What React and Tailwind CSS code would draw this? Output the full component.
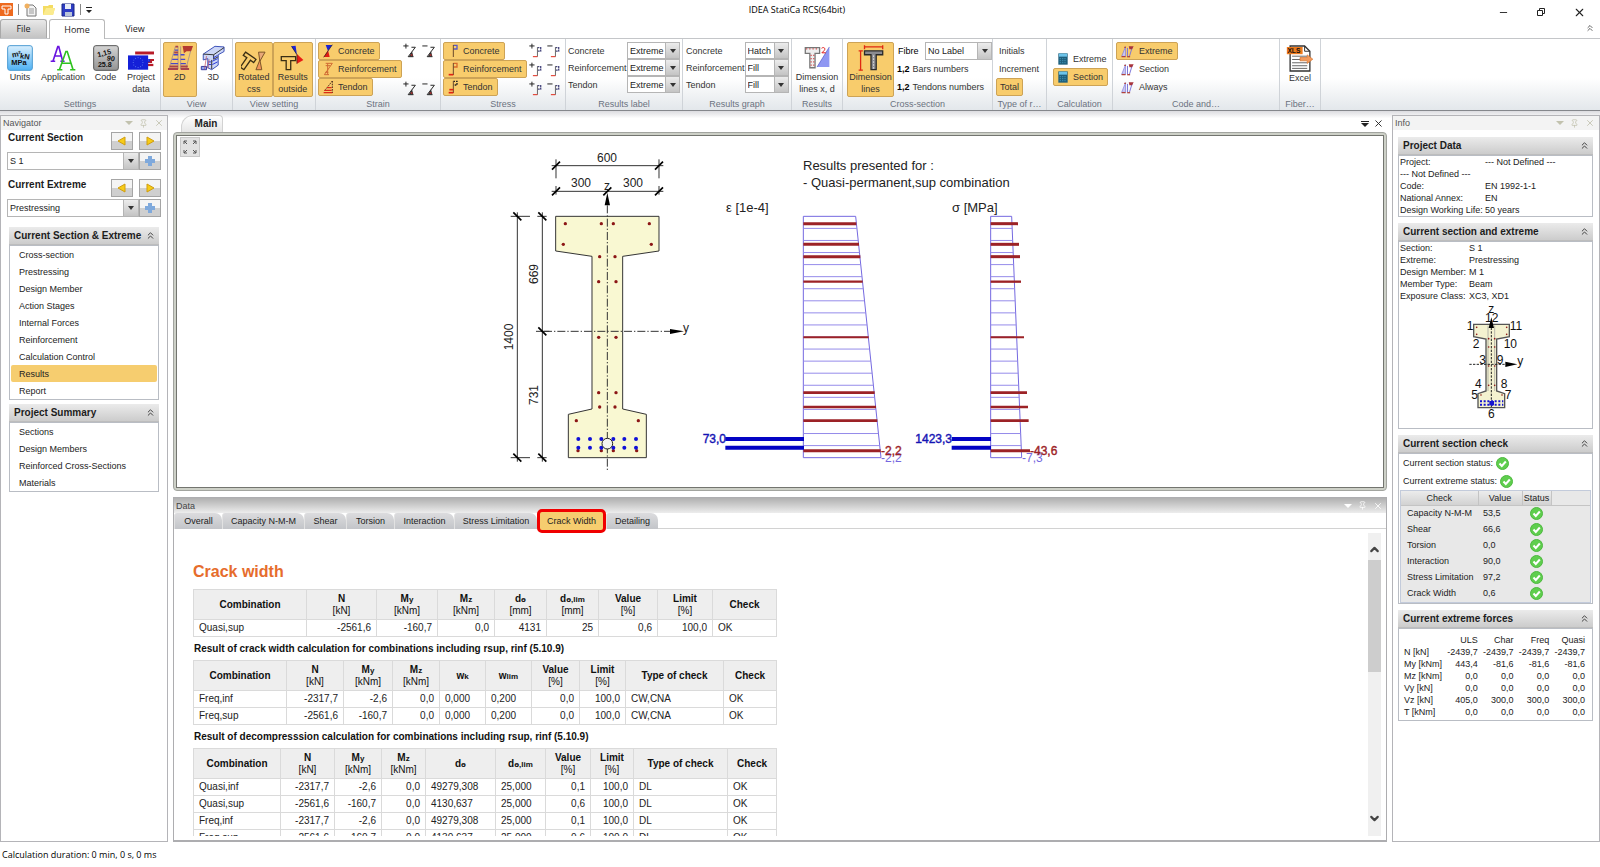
import { ChevronDown, ChevronUp, ChevronsUp, Minus, Pin, X } from "lucide-react";

const ON = "bg-[#f8cc6c] border-[#cda356]";
const OFF = "bg-transparent border-transparent";

/* ---------- ribbon icons ---------- */

function UnitsIcon() {
  return (
    <svg viewBox="0 0 80 80" className="w-[26px] h-[26px]">
      <defs>
        <linearGradient id="units" x1="0" y1="0" x2="0" y2="1">
          <stop offset="0" stopColor="#d8eefd" />
          <stop offset="1" stopColor="#4fb2f4" />
        </linearGradient>
      </defs>
      <rect x="2" y="2" width="76" height="76" rx="7" fill="url(#units)" stroke="#4a9ad2" strokeWidth="3" />
      <g fontFamily="Liberation Sans" fontWeight="bold" fontSize="23" fill="#111">
        <text x="16" y="38" transform="rotate(-12 20 34)">m²</text>
        <text x="40" y="42" transform="rotate(8 50 38)">kN</text>
        <text x="13" y="63">MPa</text>
      </g>
    </svg>
  );
}

function ApplicationIcon() {
  return (
    <svg viewBox="0 0 80 80" className="w-[26px] h-[26px]" fill="none">
      <path d="M2 50h14M9 50L24 5h3l12 45M32 50h13M14 34h20" stroke="#6a16e0" strokeWidth="5" />
      <path d="M22 76h16M29 76L49 20h4l18 56M62 76h16M37 56h28" stroke="#2fc21f" strokeWidth="5" />
    </svg>
  );
}

function CodeIcon() {
  return (
    <svg viewBox="0 0 80 80" className="w-[26px] h-[26px]">
      <defs>
        <linearGradient id="code" x1="0" y1="0" x2="0" y2="1">
          <stop offset="0" stopColor="#d4d4d4" />
          <stop offset="1" stopColor="#949494" />
        </linearGradient>
      </defs>
      <rect x="2" y="2" width="76" height="76" rx="7" fill="url(#code)" stroke="#555" strokeWidth="3" />
      <g fontFamily="Liberation Sans" fontWeight="bold" fontSize="22" fill="#111">
        <text x="14" y="34" transform="rotate(-14 30 30)">1,15</text>
        <text x="43" y="48" transform="rotate(10 50 40)">90</text>
        <text x="15" y="67">25.8</text>
      </g>
    </svg>
  );
}

function ProjectIcon() {
  const stars = Array.from({ length: 12 }, (_, i) => (i * Math.PI) / 6);
  return (
    <svg viewBox="0 0 84 80" className="w-[28px] h-[26px]">
      <path d="M24 20h58v9H24z" fill="#b81c28" />
      <path d="M68 43h14v6H68zM62 49h14v6H62z" fill="#b81c28" />
      <path d="M64 43h6v10h-6z" fill="#1d2fd0" />
      <path d="M60 58h20v7H60z" fill="#b81c28" />
      <path d="M2 32h62v44H2z" fill="#1420d8" />
      {stars.map(a => (
        <circle key={a} cx={33 + 15 * Math.cos(a)} cy={54 + 15 * Math.sin(a)} r="1.500" fill="#7fa8ff" />
      ))}
    </svg>
  );
}

function View2DIcon() {
  return (
    <svg viewBox="0 0 80 80" className="w-[26px] h-[26px]" fill="none">
      <path d="M26 4L6 74M34 4v70M42 4v70M76 6L58 74" stroke="#8a7a90" strokeWidth="2" />
      <path d="M24 16h10M20 30h14M16 44h18M12 57h22M42 30h12M42 44h14M42 57h16" stroke="#4a48c8" strokeWidth="4" />
      <path d="M26 5h8M22 23h12M3 74h31M8 66h26M42 74h26M42 66h22" stroke="#a8444c" strokeWidth="6" />
      <path d="M48 3h32l-6 16H60l-8 6z" fill="#b43a30" />
    </svg>
  );
}

function View3DIcon() {
  return (
    <svg viewBox="0 0 80 80" className="w-[26px] h-[26px]" fill="none" strokeWidth="3">
      <path d="M10 28L46 4l28 2v14L56 30v32L36 76 24 70V42l-14 4z" fill="#ccd6f6" stroke="#3a4fb8" />
      <path d="M10 28l32 2 32-22M42 30v14l14-8M36 46v28" stroke="#333" />
      <path d="M40 40l14-8M38 50l16-8M38 60l16-8M26 52h8M26 60h8" stroke="#2635d8" />
      <path d="M4 66h16v10H4z" fill="#8ea6ee" stroke="#3a3a9c" />
      <path d="M20 34l-6 40M28 44l-4 28" stroke="#c04858" strokeWidth="2" />
    </svg>
  );
}

function RotatedIcon() {
  return (
    <svg viewBox="0 0 80 80" className="w-[26px] h-[26px]" fill="none">
      <path d="M14 22l32 22-7 10-10-7-20 29-11-8 20-29-11-7z" stroke="#3a2e14" strokeWidth="4" />
      <path d="M54 22h20L58 50z" fill="#e8a878" stroke="#7a5326" strokeWidth="3" />
      <path d="M58 46L46 76h18z" fill="#f0955a" stroke="#7a5326" strokeWidth="3" />
    </svg>
  );
}

function OutsideIcon() {
  return (
    <svg viewBox="0 0 80 80" className="w-[26px] h-[26px]">
      <path d="M4 36h44v12H33v28H19V48H4z" fill="none" stroke="#3a2e14" strokeWidth="4" />
      <path d="M34 4l14-2 4 28z" fill="#1c24d8" />
      <path d="M52 28l20 18-20 12z" fill="#e81c14" />
      <path d="M36 4l16 26v28" fill="none" stroke="#222" strokeWidth="2" />
    </svg>
  );
}

function DimensionXdIcon() {
  return (
    <svg viewBox="0 0 80 80" className="w-[26px] h-[26px]">
      <path d="M4 8h44v18H34v44H18V26H4z" fill="#eee" stroke="#777" strokeWidth="4" />
      <path d="M6 12h40M22 30v38M30 30v38" stroke="#d03030" strokeWidth="3" strokeDasharray="4 6" />
      <path d="M78 6v62H40z" fill="#8f97f2" />
      <path d="M78 6L40 68" stroke="#4a52c8" strokeWidth="2" />
      <path d="M54 10c8-6 14 2 7 8l-6 6h12" fill="none" stroke="#e01818" strokeWidth="3" />
    </svg>
  );
}

function DimensionIcon() {
  return (
    <svg viewBox="0 0 84 80" className="w-[28px] h-[26px]" fill="none">
      <path d="M22 6h56M10 18v60" stroke="#e02812" strokeWidth="4" />
      <path d="M22 1v12M78 1v12M4 18h13M4 77h13" stroke="#e02812" strokeWidth="4" />
      <path d="M22 18h56v12H58v46H42V30H22z" fill="#8b8b90" stroke="#2a2a2a" strokeWidth="4" />
      <path d="M50 32v42" stroke="#ddd" strokeWidth="3" strokeDasharray="5 4" />
    </svg>
  );
}

function ExcelIcon() {
  return (
    <svg viewBox="0 0 84 82" className="w-[28px] h-[27px]">
      <path d="M12 3h44l16 16v60H12z" fill="#fff" stroke="#333" strokeWidth="4" />
      <path d="M56 3v16h16" fill="none" stroke="#333" strokeWidth="3" />
      <path d="M18 34h46M18 44h46M18 54h46M18 63h46M18 71h46" stroke="#666" strokeWidth="3" />
      <path d="M2 6h48v22H2z" fill="#ee7a1c" />
      <text x="4" y="24" fontFamily="Liberation Sans" fontWeight="bold" fontSize="20" fill="#111">XLS</text>
      <path d="M42 38h22v-8l17 13-17 13v-8H42z" fill="#f29a5c" stroke="#d46f28" strokeWidth="2" />
    </svg>
  );
}

function StrainIcon({ kind }) {
  if (kind === "concrete") {
    return (
      <svg viewBox="0 0 30 40" className="w-[10px] h-[14px] shrink-0">
        <path d="M8 2h20L15 20z" fill="#1c24d0" />
        <path d="M15 18l5 20H2z" fill="#e01c14" />
        <path d="M28 1L2 39" stroke="#222" strokeWidth="2" />
      </svg>
    );
  }
  if (kind === "reinforcement") {
    return (
      <svg viewBox="0 0 30 40" className="w-[10px] h-[14px] shrink-0" fill="none">
        <path d="M8 3h20L4 37h14M14 3v34M8 10h14M6 30h10" stroke="#d06a34" strokeWidth="3" />
      </svg>
    );
  }
  return (
    <svg viewBox="0 0 30 40" className="w-[10px] h-[14px] shrink-0" fill="none">
      <path d="M28 2L4 32M28 2v36" stroke="#4a2c1c" strokeWidth="3" strokeDasharray="5 3" />
      <path d="M2 37h26M4 30h22M12 22h14" stroke="#d82c18" strokeWidth="4" />
    </svg>
  );
}

function StressIcon({ kind }) {
  const color = { concrete: "#5a5ac4", reinforcement: "#d86a2c", tendon: "#222" }[kind];
  return (
    <svg viewBox="0 0 30 40" className="w-[10px] h-[14px] shrink-0" fill="none">
      <path d="M16 3h11v11H16" stroke={color} strokeWidth="4" strokeDasharray={kind === "tendon" ? "5 3" : "none"} />
      <path d="M16 2v36" stroke="#6b4a2c" strokeWidth="3" />
      {kind !== "concrete" && <path d="M2 37h14" stroke="#e02414" strokeWidth="5" />}
      {kind === "tendon" && <path d="M4 28h12" stroke="#e02414" strokeWidth="5" />}
    </svg>
  );
}

function StepIcon({ plus, stress }) {
  return (
    <svg viewBox="0 0 40 44" className="w-[13px] h-[15px]" fill="none">
      <path d={plus ? "M1 8h16M9 1v15" : "M1 8h16"} stroke="#222" strokeWidth="3" />
      {stress ? (
        <>
          <path d="M26 13h10v11H26" stroke="#44447c" strokeWidth="4" strokeDasharray="6 2" />
          <path d="M26 12v29" stroke="#666" strokeWidth="3" />
          <path d="M12 41h14" stroke="#e02414" strokeWidth="3" />
        </>
      ) : (
        <>
          <path d="M38 12L16 41M26 12h12M16 41h16" stroke="#222" strokeWidth="3" />
          <path d="M28 24l4 17H18z" fill="#333" />
          <path d="M24 36h5" stroke="#d03030" strokeWidth="4" />
        </>
      )}
    </svg>
  );
}

function CalcIcon() {
  return (
    <svg viewBox="0 0 30 36" className="w-[10px] h-[12px] shrink-0">
      <path d="M1 1h28v34H1z" fill="#1e5f7c" />
      <path d="M3 2h24v9H3z" fill="#6cc4ea" />
      <path d="M5 17h20M5 23h20M5 29h20" stroke="#3f90b4" strokeWidth="3" strokeDasharray="4 3" />
    </svg>
  );
}

function CodeCheckIcon() {
  return (
    <svg viewBox="0 0 40 38" className="w-[13px] h-[13px] shrink-0" fill="none">
      <path d="M14 4L2 34h12z" fill="#c9c6f2" stroke="#7a74d8" strokeWidth="2" />
      <path d="M2 35h12M10 6h5" stroke="#b0443c" strokeWidth="4" />
      <path d="M20 8v26M34 8l-8 26" stroke="#7a74d8" strokeWidth="3" />
      <path d="M24 3h15l-5 9h-8z" fill="#a8343c" />
      <path d="M19 35h9" stroke="#b0443c" strokeWidth="4" />
    </svg>
  );
}

/* ---------- ribbon parts ---------- */

function Group({ label, width, pad = "px-[2px]", children }) {
  return (
    <section className={`flex flex-col shrink-0 border-r border-[#cfd3d8] pt-[3px] ${width}`}>
      <div className={`flex h-[56px] ${pad}`}>{children}</div>
      <div className="flex-1 flex items-center justify-center text-[#6b7280] whitespace-nowrap">{label}</div>
    </section>
  );
}

function BigButton({ icon, lines, active, width }) {
  return (
    <button className={`flex flex-col items-center h-[55px] border rounded-[2px] pt-[2px] leading-[12px] whitespace-nowrap text-[#333] ${width} ${active ? ON : OFF}`}>
      {icon}
      {lines.map(l => <span key={l}>{l}</span>)}
    </button>
  );
}

function SmallButton({ icon, label, active }) {
  return (
    <button className={`flex items-center self-start gap-[5px] h-[18px] border rounded-[2px] pl-[4px] pr-[4px] whitespace-nowrap text-[#333] ${active ? ON : OFF}`}>
      {icon}
      {label}
    </button>
  );
}

function Select({ value, width, label, height = "h-[17px]", editable }) {
  return (
    <div className={`flex border border-[#b5b5b5] bg-white ${height} ${width}`}>
      <select aria-label={label} defaultValue={value} className="appearance-none flex-1 min-w-0 pl-[2px] outline-none bg-white text-[#222]">
        <option>{value}</option>
      </select>
      <span className={`flex items-center justify-center border-l border-[#b5b5b5] bg-linear-to-b from-[#ececec] to-[#c4c4c4] ${editable ? "w-[15px]" : "w-[14px]"}`}>
        <svg viewBox="0 0 6 4" className="w-[6px] h-[4px]"><path d="M0 0h6L3 4z" fill="#333" /></svg>
      </span>
    </div>
  );
}

const KINDS = [
  ["concrete", "Concrete"],
  ["reinforcement", "Reinforcement"],
  ["tendon", "Tendon"],
];

function LabelledSelects({ values, width, name }) {
  return (
    <div className="flex-1 flex flex-col">
      {KINDS.map(([k, label], i) => (
        <div key={k} className="flex items-center justify-between h-[17px] whitespace-nowrap text-[#333]">
          <span>{label}</span>
          <Select value={values[i]} width={width} label={`${name} ${label}`} />
        </div>
      ))}
    </div>
  );
}

function Ribbon() {
  return (
    <div className="flex h-[73px] shrink-0 overflow-hidden border-t border-b border-t-[#c4c6c9] border-b-[#85878c] bg-linear-to-b from-white from-55% to-[#e3e7eb]">
      <Group label="Settings" width="w-[161px]" pad="px-0">
        <BigButton icon={<UnitsIcon />} lines={["Units"]} width="w-[40px]" />
        <BigButton icon={<ApplicationIcon />} lines={["Application"]} width="w-[46px]" />
        <BigButton icon={<CodeIcon />} lines={["Code"]} width="w-[39px]" />
        <BigButton icon={<ProjectIcon />} lines={["Project", "data"]} width="w-[32px]" />
      </Group>
      <Group label="View" width="w-[72px]">
        <BigButton icon={<View2DIcon />} lines={["2D"]} width="w-[34px]" active />
        <BigButton icon={<View3DIcon />} lines={["3D"]} width="w-[34px]" />
      </Group>
      <Group label="View setting" width="w-[83px]">
        <BigButton icon={<RotatedIcon />} lines={["Rotated", "css"]} width="w-[38px]" active />
        <BigButton icon={<OutsideIcon />} lines={["Results", "outside"]} width="w-[41px]" active />
      </Group>
      <Group label="Strain" width="w-[125px]">
        <div className="flex-1 flex flex-col">
          {KINDS.map(([k, label]) => <SmallButton key={k} icon={<StrainIcon kind={k} />} label={label} active />)}
        </div>
        <div className="flex flex-col justify-between pb-[2px] pt-[1px]">
          {[1, 3].map(r => (
            <div key={r} className="flex gap-[6px] pr-[3px]">
              <button aria-label="Increase strain"><StepIcon plus /></button>
              <button aria-label="Decrease strain"><StepIcon /></button>
            </div>
          ))}
        </div>
      </Group>
      <Group label="Stress" width="w-[125px]">
        <div className="flex-1 flex flex-col">
          {KINDS.map(([k, label]) => <SmallButton key={k} icon={<StressIcon kind={k} />} label={label} active />)}
        </div>
        <div className="flex flex-col justify-between pb-[2px] pt-[1px]">
          {KINDS.map(([k]) => (
            <div key={k} className="flex gap-[5px] pr-[3px]">
              <button aria-label={`Increase ${k} stress`}><StepIcon plus stress /></button>
              <button aria-label={`Decrease ${k} stress`}><StepIcon stress /></button>
            </div>
          ))}
        </div>
      </Group>
      <Group label="Results label" width="w-[117px]">
        <LabelledSelects name="Label" values={["Extreme", "Extreme", "Extreme"]} width="w-[53px]" />
      </Group>
      <Group label="Results graph" width="w-[109px]" pad="px-[3px]">
        <LabelledSelects name="Graph" values={["Hatch", "Fill", "Fill"]} width="w-[44px]" />
      </Group>
      <Group label="Results" width="w-[51px]" pad="px-[1px]">
        <BigButton icon={<DimensionXdIcon />} lines={["Dimension", "lines x, d"]} width="w-[48px]" />
      </Group>
      <Group label="Cross-section" width="w-[150px]" pad="pl-[4px]">
        <BigButton icon={<DimensionIcon />} lines={["Dimension", "lines"]} width="w-[47px]" active />
        <div className="flex-1 flex flex-col pl-[3px] whitespace-nowrap text-[#333]">
          <div className="flex items-center justify-between h-[18px] pl-[1px]">
            <span className="text-black">Fibre</span>
            <Select value="No Label" width="w-[67px]" label="Fibre" height="h-[18px]" />
          </div>
          <button className="flex items-center gap-[3px] h-[18px]"><b className="text-black">1,2</b>Bars numbers</button>
          <button className="flex items-center gap-[3px] h-[18px]"><b className="text-black">1,2</b>Tendons numbers</button>
        </div>
      </Group>
      <Group label="Type of r…" width="w-[54px]" pad="px-[3px]">
        <div className="flex flex-col text-[#333]">
          <button className="h-[18px] px-[3px] text-left">Initials</button>
          <button className="h-[18px] px-[3px] text-left">Increment</button>
          <button className={`h-[18px] px-[2px] border rounded-[2px] self-start w-[27px] ${ON}`}>Total</button>
        </div>
      </Group>
      <Group label="Calculation" width="w-[66px]" pad="px-[6px]">
        <div className="flex flex-col pt-[8px]">
          <SmallButton icon={<CalcIcon />} label="Extreme" />
          <SmallButton icon={<CalcIcon />} label="Section" active />
        </div>
      </Group>
      <Group label="Code and…" width="w-[167px]" pad="px-[3px]">
        <div className="flex flex-col">
          <SmallButton icon={<CodeCheckIcon />} label="Extreme" active />
          <SmallButton icon={<CodeCheckIcon />} label="Section" />
          <SmallButton icon={<CodeCheckIcon />} label="Always" />
        </div>
      </Group>
      <Group label="Fiber…" width="w-[41px]" pad="px-0">
        <BigButton icon={<ExcelIcon />} lines={["Excel"]} width="w-[40px]" />
      </Group>
    </div>
  );
}

function TitleBar() {
  return (
    <header className="shrink-0 font-['Open_Sans','Noto_Sans',sans-serif]">
      <div className="grid grid-cols-[1fr_auto_1fr] h-[19px] items-center">
        <div className="flex items-center gap-[5px]">
          <svg viewBox="0 0 13 13" className="w-[13px] h-[13px]">
            <path d="M0 0h13v13H0z" fill="#ee6a1e" />
            <path d="M2 3h9v3H8v5H5V6H2z" fill="none" stroke="#fff" />
          </svg>
          <span className="w-px h-[11px] bg-[#888]" />
          <button aria-label="New">
            <svg viewBox="0 0 13 14" className="w-[13px] h-[14px]">
              <path d="M3 2h6l3 3v8H3z" fill="#f4f4f4" stroke="#777" />
              <path d="M5 6h5M5 8h5M5 10h5" stroke="#999" />
              <circle cx="3" cy="3" r="2.500" fill="#f0b060" />
            </svg>
          </button>
          <button aria-label="Open">
            <svg viewBox="0 0 14 13" className="w-[14px] h-[13px]">
              <path d="M1 12V3h5l1-1h4v3h2l-2 7z" fill="#f4dc62" />
              <path d="M1 12l3-7h9l-2 7z" fill="#fbeb8e" />
            </svg>
          </button>
          <button aria-label="Save">
            <svg viewBox="0 0 14 14" className="w-[14px] h-[14px]">
              <path d="M1 1h12v12H1z" fill="#2d3cc4" stroke="#1b2684" />
              <path d="M4 1h6v5H4z" fill="#e8ecf6" />
              <path d="M4 9h7v4H4z" fill="#b9c4d8" />
            </svg>
          </button>
          <span className="w-px h-[11px] bg-[#888]" />
          <button aria-label="Customize toolbar">
            <svg viewBox="0 0 6 6" className="w-[6px] h-[6px]"><path d="M0 0h6v1H0zM0 3h6L3 6z" fill="#222" /></svg>
          </button>
        </div>
        <h1 className="text-[9px] pr-[6px] text-black">IDEA StatiCa RCS(64bit)</h1>
        <div className="flex justify-end items-center gap-[27px] pr-[14px] pt-[5px] text-[#222]">
          <button aria-label="Minimize"><Minus size={11} strokeWidth={2} /></button>
          <button aria-label="Restore">
            <svg viewBox="0 0 10 10" className="w-[10px] h-[10px]" fill="none" stroke="currentColor">
              <path d="M1.500 3.500h5v5h-5zM3.500 3V1.500h5v5H7" />
            </svg>
          </button>
          <button aria-label="Close"><X size={13} strokeWidth={2} /></button>
        </div>
      </div>
      <nav className="flex h-[19px] items-end text-[9px] text-[#222]">
        <button className="w-[47px] h-[19px] border border-b-0 border-[#a9a9a9] rounded-t-[3px] bg-linear-to-b from-[#e9e9e9] to-[#c3c3c3]">File</button>
        <button className="w-[56px] h-[20px] -mb-px ml-[2px] border border-b-0 border-[#b9b9b9] rounded-t-[3px] bg-white relative">Home</button>
        <button className="w-[60px] h-[19px]">View</button>
        <button aria-label="Collapse ribbon" className="ml-auto mr-[5px] mb-[5px]"><ChevronsUp size={10} className="text-[#444]" /></button>
      </nav>
    </header>
  );
}

/* ---------- side panels ---------- */

function PanelTools({ color }) {
  return (
    <span className={`flex items-center gap-[6px] ${color}`}>
      <svg viewBox="0 0 8 4" className="w-[8px] h-[4px]"><path d="M0 0h8L4 4z" fill="currentColor" /></svg>
      <Pin size={9} />
      <X size={10} />
    </span>
  );
}

function Caption({ children }) {
  return (
    <h2 className="flex items-center justify-between h-[18px] pl-[5px] pr-[3px] text-[10px] font-bold text-[#1c1c1c] whitespace-nowrap bg-linear-to-b from-[#ebebeb] to-[#cccccc] border-b border-[#bdbdbd]">
      {children}
      <ChevronsUp size={11} className="text-[#333]" />
    </h2>
  );
}

function StepButton({ dir }) {
  return (
    <button aria-label={dir} className="flex items-center justify-center w-[22px] h-[18px] border border-[#a5a5a5] bg-linear-to-b from-[#f4f4f4] from-48% to-[#cfcfcf] to-52%">
      <svg viewBox="0 0 10 10" className="w-[10px] h-[10px]">
        {dir === "Add" ? (
          <path d="M3 0h4v3h3v4H7v3H3V7H0V3h3z" fill="#7fa9dc" />
        ) : (
          <path d={dir === "Next" ? "M2 1l7 4-7 4z" : "M8 1L1 5l7 4z"} fill="#f7cc18" stroke="#cf9d10" />
        )}
      </svg>
    </button>
  );
}

function Picker({ title, value }) {
  return (
    <div>
      <div className="flex items-start justify-between h-[20px]">
        <h2 className="text-[10px] font-bold leading-[12px] pl-px text-[#1c1c1c]">{title}</h2>
        <div className="flex gap-[6px]">
          <StepButton dir="Previous" />
          <StepButton dir="Next" />
        </div>
      </div>
      <div className="flex">
        <Select value={value} width="flex-1" label={title} height="h-[18px]" editable />
        <StepButton dir="Add" />
      </div>
    </div>
  );
}

const NAV = [
  ["Current Section & Extreme", ["Cross-section", "Prestressing", "Design Member", "Action Stages", "Internal Forces", "Reinforcement", "Calculation Control", "Results", "Report"]],
  ["Project Summary", ["Sections", "Design Members", "Reinforced Cross-Sections", "Materials"]],
];

function Navigator() {
  return (
    <aside className="w-[168px] shrink-0 border border-[#b4b4b8] bg-white">
      <div className="flex items-center justify-between h-[14px] pl-[2px] pr-[3px] bg-[#f3f3f3] text-[#555]">
        Navigator
        <PanelTools color="text-[#c2c2ae]" />
      </div>
      <div className="flex flex-col gap-[9px] pl-[6px] pr-[6px] pt-[2px]">
        <Picker title="Current Section" value="S 1" />
        <Picker title="Current Extreme" value="Prestressing" />
      </div>
      <div className="flex flex-col gap-[4px] pt-[10px] pl-[8px] pr-[8px]">
        {NAV.map(([title, items]) => (
          <section key={title}>
            <Caption>{title}</Caption>
            <ul className="border border-[#b9bdc4] px-px">
              {items.map(item => (
                <li key={item} className="flex">
                  <button className={`flex-1 h-[17px] pl-[8px] text-left rounded-[2px] text-[#222] ${item === "Results" ? "bg-[#f6cd6f]" : ""}`}>{item}</button>
                </li>
              ))}
            </ul>
          </section>
        ))}
      </div>
    </aside>
  );
}

function Tick() {
  return (
    <svg viewBox="0 0 13 13" className="w-[13px] h-[13px]" role="img" aria-label="OK">
      <circle cx="6.500" cy="6.500" r="6" fill="#5fce4e" stroke="#4cb83e" />
      <path d="M3.500 6.500l2.300 2.500 4-4.500" fill="none" stroke="#fff" strokeWidth="2" />
    </svg>
  );
}

function Pairs({ rows, cols }) {
  return (
    <dl className={`grid gap-x-0 leading-[12px] pl-px text-[#222] whitespace-nowrap ${cols}`}>
      {rows.map(([k, v]) => (
        <div key={k} className={v ? "contents" : "col-span-2"}>
          <dt>{k}</dt>
          {v && <dd>{v}</dd>}
        </div>
      ))}
    </dl>
  );
}

const CHECKS = [
  ["Capacity N-M-M", "53,5"],
  ["Shear", "66,6"],
  ["Torsion", "0,0"],
  ["Interaction", "90,0"],
  ["Stress Limitation", "97,2"],
  ["Crack Width", "0,6"],
];

const FORCES = [
  ["N [kN]", "-2439,7", "-2439,7", "-2439,7", "-2439,7"],
  ["My [kNm]", "443,4", "-81,6", "-81,6", "-81,6"],
  ["Mz [kNm]", "0,0", "0,0", "0,0", "0,0"],
  ["Vy [kN]", "0,0", "0,0", "0,0", "0,0"],
  ["Vz [kN]", "405,0", "300,0", "300,0", "300,0"],
  ["T [kNm]", "0,0", "0,0", "0,0", "0,0"],
];

// [x, baseline, text] in thirds of a pixel, like the section outline below
const POINTS = [
  [270, 663, "1"], [408, 663, "11"], [335, 638, "12"], [288, 718, "2"], [391, 718, "10"],
  [308, 765, "3"], [360, 765, "9"], [295, 838, "4"], [372, 838, "8"], [284, 870, "5"],
  [384, 870, "7"], [334, 927, "6"], [334, 612, "z"], [421, 767, "y"],
];

function SectionThumb() {
  return (
    <svg viewBox="57 579 579 378" className="w-full h-[126px]">
      <path d="M281 646h107v37l-38 7v156l24 8v42h-80v-42l24-8V690l-37-7z" fill="#f4f2d0" stroke="#555" strokeWidth="4" />
      <path d="M324 650v196M344 650v196" stroke="#999" strokeWidth="2" />
      <path d="M334 645v250M268 766h110" stroke="#222" strokeWidth="3" strokeDasharray="7 4" />
      <path d="M334 625l-8 32h16zM376 758v16l36-8z" fill="#000" />
      {[[290, 655], [380, 655], [290, 676], [380, 676], [326, 689], [344, 689], [326, 714], [344, 714], [326, 771], [344, 771], [326, 829], [344, 829], [303, 858], [366, 858]].map(([x, y]) => (
        <circle key={`${x}-${y}`} cx={x} cy={y} r="2.500" fill="#8c1616" />
      ))}
      <path d="M300 877h70M300 887h70" stroke="#1414d0" strokeWidth="6" strokeDasharray="6 5" />
      <path d="M328 876h14v13h-14z" fill="#1414d0" />
      <g fontSize="36" fill="#111" textAnchor="middle">
        {POINTS.map(([x, y, t]) => <text key={t} x={x} y={y}>{t}</text>)}
      </g>
    </svg>
  );
}

function Info() {
  return (
    <aside className="w-[208px] shrink-0 border border-[#b4b4b8] bg-white">
      <div className="flex items-center justify-between h-[14px] pl-[2px] pr-[4px] bg-[#f3f3f3] text-[#555]">
        Info
        <PanelTools color="text-[#c2c2ae]" />
      </div>
      <div className="flex flex-col gap-[6px] pt-[7px] pl-[5px] pr-[6px]">
        <section>
          <Caption>Project Data</Caption>
          <div className="border border-[#b9bdc4]">
            <Pairs
              cols="grid-cols-[85px_1fr]"
              rows={[
                ["Project:", "--- Not Defined ---"],
                ["--- Not Defined ---"],
                ["Code:", "EN 1992-1-1"],
                ["National Annex:", "EN"],
                ["Design Working Life:", "50 years"],
              ]}
            />
          </div>
        </section>
        <section>
          <Caption>Current section and extreme</Caption>
          <div className="border border-[#b9bdc4]">
            <Pairs
              cols="grid-cols-[69px_1fr]"
              rows={[
                ["Section:", "S 1"],
                ["Extreme:", "Prestressing"],
                ["Design Member:", "M 1"],
                ["Member Type:", "Beam"],
                ["Exposure Class:", "XC3, XD1"],
              ]}
            />
            <SectionThumb />
          </div>
        </section>
        <section>
          <Caption>Current section check</Caption>
          <div className="border border-[#b9bdc4] text-[#222]">
            <p className="flex items-center gap-[3px] h-[18px] pl-[4px]">Current section status:<Tick /></p>
            <p className="flex items-center gap-[3px] h-[18px] pl-[4px]">Current extreme status:<Tick /></p>
            <div className="bg-[#e8e8e8] border border-[#c3cbdb] pb-[1px] ml-px mr-px">
              <table className="border-collapse w-full text-left">
                <thead>
                  <tr className="h-[14px] border-b border-[#c4c4c4]">
                    <th className="w-[77px] font-normal text-center border-r border-[#c4c4c4] bg-linear-to-b from-[#ececec] to-[#d2d2d2]">Check</th>
                    <th className="w-[44px] font-normal text-center border-r border-[#c4c4c4] bg-linear-to-b from-[#ececec] to-[#d2d2d2]">Value</th>
                    <th className="w-[29px] font-normal text-center border-r border-[#c4c4c4] bg-linear-to-b from-[#ececec] to-[#d2d2d2]">Status</th>
                    <th aria-label="Note" />
                  </tr>
                </thead>
                <tbody>
                  {CHECKS.map(([name, value]) => (
                    <tr key={name} className="h-[16px]">
                      <td className="pl-[6px] whitespace-nowrap">{name}</td>
                      <td className="pl-[5px]">{value}</td>
                      <td><span className="flex justify-center"><Tick /></span></td>
                      <td />
                    </tr>
                  ))}
                </tbody>
              </table>
            </div>
          </div>
        </section>
        <section>
          <Caption>Current extreme forces</Caption>
          <div className="border border-[#b9bdc4] pt-[5px] pb-[2px] pl-[5px] pr-[7px] text-[#222]">
            <table className="w-full leading-[12px] text-right whitespace-nowrap">
              <thead>
                <tr>
                  <th className="w-[38px]" aria-label="Force" />
                  {["ULS", "Char", "Freq", "Quasi"].map(h => <th key={h} className="font-normal">{h}</th>)}
                </tr>
              </thead>
              <tbody>
                {FORCES.map(([name, ...vals]) => (
                  <tr key={name}>
                    <th className="font-normal text-left">{name}</th>
                    {vals.map((v, i) => <td key={i}>{v}</td>)}
                  </tr>
                ))}
              </tbody>
            </table>
          </div>
        </section>
      </div>
    </aside>
  );
}

/* ---------- drawing ---------- */

const REBARS = [
  [256, 281], [364, 281], [400, 281], [508, 281], [250, 343], [514, 343], [359, 380], [405, 380],
  [356, 455], [408, 455], [356, 622], [408, 622], [356, 788], [408, 788], [359, 831], [405, 831],
  [289, 872], [475, 872], [294, 962], [364, 962], [400, 962], [470, 962],
];

const LEVELS = [281, 343, 380, 455, 622, 788, 831, 872, 962];
const THICK = [9, 9, 9, 7, 6, 8, 8, 8, 9];
const STRAIN_ENDS = [499, 507, 511, 518, 536, 554, 558, 562, 572];
const STRESS_ENDS = [984, 987, 990, 993, 1002, 1011, 1014, 1016, 1020];

function Diagram({ left, top, bottom, ends }) {
  const hatch = Array.from({ length: 19 }, (_, i) => (i + 1) / 20);
  return (
    <>
      <path d={`M${left} 259H${top}L${bottom} 983H${left}z`} fill="none" stroke="#7468e0" strokeWidth="3" />
      {hatch.map(t => (
        <path key={t} d={`M${left} ${259 + 724 * t}H${top + (bottom - top) * t}`} stroke="#958bea" strokeWidth="3" />
      ))}
      {LEVELS.map((y, i) => (
        <path key={y} d={`M${left} ${y}H${ends[i]}`} stroke="#9c2226" strokeWidth={THICK[i]} />
      ))}
    </>
  );
}

function Drawing() {
  return (
    <svg viewBox="177 136 1206 351" className="w-full h-full" fontSize="12" fill="#222">
      <g transform="translate(480 130) scale(.33333)">
        <path d="M227 259h310v104l-109 16v458l71 16v130H265V853l71-16V379l-109-16z" fill="#f9f8d2" stroke="#333" strokeWidth="3" />
        <path d="M215 107h335M215 184h335M228 88v57M537 88v57M228 168v26M537 168v26" stroke="#333" strokeWidth="3" />
        <path d="M112 247v748M187 247v748M92 259h58M172 259h28M92 983h58M172 983h28M168 604h40" stroke="#333" strokeWidth="3" />
        <path d="M216 119l24-24M525 119l24-24M216 196l24-24M370 196l24-24M525 196l24-24" stroke="#000" strokeWidth="5" />
        <path d="M100 247l24 24M175 247l24 24M175 592l24 24M100 971l24 24M175 971l24 24" stroke="#000" strokeWidth="5" />
        <path d="M382 226v794" stroke="#333" strokeWidth="3" strokeDasharray="24 6 4 6" />
        <path d="M192 604h380" stroke="#333" strokeWidth="3" strokeDasharray="24 6 4 6" />
        <path d="M382 188l-8 38h16zM570 597v15l42-8z" fill="#000" />
        {REBARS.map(([x, y]) => <circle key={`${x}-${y}`} cx={x} cy={y} r="5" fill="#8c1616" />)}
        {[295, 330, 364, 400, 433, 468].map(x => (
          <g key={x} fill="#1010d8">
            <circle cx={x} cy="927" r="6" />
            <circle cx={x} cy="953" r="6" />
          </g>
        ))}
        <circle cx="382" cy="941" r="16" fill="#f4f4f0" stroke="#222" strokeWidth="3" />
      </g>
      <g transform="translate(690 130) scale(.33333)">
        <Diagram left={340} top={497} bottom={573} ends={STRAIN_ENDS} />
        <Diagram left={902} top={965} bottom={995} ends={STRESS_ENDS} />
        <path d="M106 927h236M106 953h236M785 927h118M785 953h118" stroke="#0404c4" strokeWidth="12" />
      </g>
      <g textAnchor="middle">
        <text x="607" y="162">600</text>
        <text x="581" y="187">300</text>
        <text x="633" y="187">300</text>
        <text x="607" y="190">z</text>
        <text x="686" y="332">y</text>
        <text x="538" y="274" transform="rotate(-90 538 274)">669</text>
        <text x="538" y="395" transform="rotate(-90 538 395)">731</text>
        <text x="513" y="337" transform="rotate(-90 513 337)">1400</text>
      </g>
      <g fontSize="13">
        <text x="726" y="212">ε [1e-4]</text>
        <text x="952" y="212">σ [MPa]</text>
        <text x="803" y="170">Results presented for :</text>
        <text x="803" y="187">- Quasi-permanent,sup combination</text>
      </g>
      <g fill="#1414b4" stroke="#1414b4" strokeWidth=".4" textAnchor="end">
        <text x="726" y="443">73,0</text>
        <text x="952" y="443">1423,3</text>
      </g>
      <text x="881" y="462" fill="#7468e0">-2,2</text>
      <text x="1022" y="462" fill="#7468e0">-7,3</text>
      <g fill="#9c2226" stroke="#9c2226" strokeWidth=".4">
        <text x="881" y="455">-2,2</text>
        <text x="1030" y="455">-43,6</text>
      </g>
    </svg>
  );
}

function MainView() {
  return (
    <section className="flex-1 min-h-0 flex flex-col">
      <div className="flex items-center justify-between h-[17px] pl-[8px] pr-[3px]">
        <button className="h-[17px] w-[42px] pl-[8px] text-[10px] font-bold text-[#222] rounded-tl-[12px] rounded-tr-[4px] border border-b-0 border-[#d2d2d2] bg-linear-to-b from-white to-[#e6e6e6]">Main</button>
        <span className="flex items-center gap-[4px] text-[#222]">
          <svg viewBox="0 0 8 6" className="w-[8px] h-[6px]"><path d="M0 0h8v1H0zM0 2h8L4 6z" fill="#222" /></svg>
          <X size={11} />
        </span>
      </div>
      <div className="relative flex-1 min-h-0 rounded-[4px] border border-[#a2a49f] bg-[#cdd0c7] p-[2px]">
        <div className="w-full h-full border border-[#73756f] bg-white">
          <Drawing />
        </div>
        <button aria-label="Zoom to fit" className="absolute left-[6px] top-[4px] flex items-center justify-center w-[20px] h-[20px] border border-[#c8c8c8] bg-[#e2e2e2]">
          <svg viewBox="0 0 16 16" className="w-[16px] h-[16px]" fill="none" stroke="#555">
            <path d="M2 5V2h3M2 2l3 3M11 2h3v3M14 2l-3 3M2 11v3h3M2 14l3-3M11 14h3v-3M14 14l-3-3" />
          </svg>
        </button>
      </div>
    </section>
  );
}

/* ---------- data panel ---------- */

const TABS = [
  ["Overall", "w-[48px]"],
  ["Capacity N-M-M", "w-[82px]"],
  ["Shear", "w-[42px]"],
  ["Torsion", "w-[48px]"],
  ["Interaction", "w-[60px]"],
  ["Stress Limitation", "w-[83px]"],
  ["Crack Width", "w-[69px]"],
  ["Detailing", "w-[52px]"],
];

const L = "text-left";
const R = "text-right";

// column: [name, subscript, unit, width, align]
const CRACK = {
  cols: [
    ["Combination", "", "", 113, L], ["N", "", "[kN]", 70, R], ["M", "y", "[kNm]", 61, R], ["M", "z", "[kNm]", 57, R],
    ["d", "ɵ", "[mm]", 52, R], ["d", "ɵ,lim", "[mm]", 52, R], ["Value", "", "[%]", 59, R], ["Limit", "", "[%]", 55, R], ["Check", "", "", 64, L],
  ],
  rows: [["Quasi,sup", "-2561,6", "-160,7", "0,0", "4131", "25", "0,6", "100,0", "OK"]],
};

const WIDTHS = {
  cols: [
    ["Combination", "", "", 93, L], ["N", "", "[kN]", 57, R], ["M", "y", "[kNm]", 49, R], ["M", "z", "[kNm]", 47, R],
    ["w", "k", "", 46, L], ["w", "lim", "", 46, L], ["Value", "", "[%]", 48, R], ["Limit", "", "[%]", 46, R],
    ["Type of check", "", "", 98, L], ["Check", "", "", 53, L],
  ],
  rows: [
    ["Freq,inf", "-2317,7", "-2,6", "0,0", "0,000", "0,200", "0,0", "100,0", "CW,CNA", "OK"],
    ["Freq,sup", "-2561,6", "-160,7", "0,0", "0,000", "0,200", "0,0", "100,0", "CW,CNA", "OK"],
  ],
};

const DECOMPRESSION = {
  cols: [
    ["Combination", "", "", 87, L], ["N", "", "[kN]", 54, R], ["M", "y", "[kNm]", 47, R], ["M", "z", "[kNm]", 44, R],
    ["d", "ɵ", "", 70, L], ["d", "ɵ,lim", "", 50, L], ["Value", "", "[%]", 45, R], ["Limit", "", "[%]", 43, R],
    ["Type of check", "", "", 94, L], ["Check", "", "", 49, L],
  ],
  rows: [
    ["Quasi,inf", "-2317,7", "-2,6", "0,0", "49279,308", "25,000", "0,1", "100,0", "DL", "OK"],
    ["Quasi,sup", "-2561,6", "-160,7", "0,0", "4130,637", "25,000", "0,6", "100,0", "DL", "OK"],
    ["Freq,inf", "-2317,7", "-2,6", "0,0", "49279,308", "25,000", "0,1", "100,0", "DL", "OK"],
    ["Freq,sup", "-2561,6", "-160,7", "0,0", "4130,637", "25,000", "0,6", "100,0", "DL", "OK"],
  ],
};

function ResultTable({ data }) {
  return (
    <table className="table-fixed border-collapse w-[583px] text-[10px] leading-[12px] text-[#222]">
      <colgroup>
        {data.cols.map((c, i) => <col key={i} style={{ width: c[3] }} />)}
      </colgroup>
      <thead>
        <tr className="h-[30px] bg-[#eeeeee]">
          {data.cols.map(([name, sub, unit], i) => (
            <th key={i} className="border border-[#dadada] p-0 align-middle whitespace-nowrap text-[#111]">
              <div className="h-[12px]">{name}{sub && <span className="text-[8px]">{sub}</span>}</div>
              {unit && <div className="font-normal">{unit}</div>}
            </th>
          ))}
        </tr>
      </thead>
      <tbody>
        {data.rows.map((row, r) => (
          <tr key={r} className="h-[17px]">
            {row.map((v, i) => (
              <td key={i} className={`border border-[#dadada] py-0 px-[5px] ${data.cols[i][4]}`}>{v}</td>
            ))}
          </tr>
        ))}
      </tbody>
    </table>
  );
}

function DataPanel() {
  return (
    <section className="flex flex-col h-[345px] shrink-0 border border-b-2 border-[#adadb0] bg-white">
      <div className="flex items-center justify-between h-[15px] shrink-0 pl-[2px] pr-[3px] text-[#444] bg-linear-to-b from-[#b0b0b0] to-[#ededed]">
        Data
        <PanelTools color="text-white" />
      </div>
      <div className="flex items-center h-[16px] shrink-0 border-b border-[#d2d2d2] text-[#222]">
        {TABS.map(([name, w]) =>
          name === "Crack Width" ? (
            <button key={name} className={`h-[24px] -my-[4px] relative border-3 border-[#f00000] rounded-[5px] bg-[#f6cd6f] ${w}`}>{name}</button>
          ) : (
            <button key={name} className={`h-[16px] rounded-tr-[7px] rounded-tl-[3px] border-l border-[#e2e2e2] bg-linear-to-b from-[#dcdcde] to-[#c3c5c9] ${w}`}>{name}</button>
          )
        )}
      </div>
      <div className="flex-1 min-h-0 flex pb-[4px]">
        <div className="flex-1 overflow-hidden pl-[19px] pt-[33px]">
          <h2 className="text-[16px] leading-[20px] font-bold text-[#e66c2c] mb-[7px]">Crack width</h2>
          <ResultTable data={CRACK} />
          <h3 className="text-[10px] leading-[23px] font-bold text-[#111] pl-px">Result of crack width calculation for combinations including rsup, rinf (5.10.9)</h3>
          <ResultTable data={WIDTHS} />
          <h3 className="text-[10px] leading-[23px] font-bold text-[#111] pl-px">Result of decompresssion calculation for combinations including rsup, rinf (5.10.9)</h3>
          <ResultTable data={DECOMPRESSION} />
        </div>
        <div className="flex flex-col items-center w-[13px] mt-[4px] mr-[5px] bg-[#f0f0f0] text-[#444]">
          <button aria-label="Scroll up" className="h-[27px] flex items-center pt-[6px]"><ChevronUp size={13} strokeWidth={4} /></button>
          <div className="w-full h-[112px] bg-[#cdcdcd]" />
          <button aria-label="Scroll down" className="mt-auto h-[30px] flex items-center pb-[6px]"><ChevronDown size={13} strokeWidth={4} /></button>
        </div>
      </div>
    </section>
  );
}

export default function App() {
  return (
    <div className="h-screen flex flex-col overflow-hidden bg-white text-[9px] leading-[12px] font-['Liberation_Sans',Arial,sans-serif]">
      <TitleBar />
      <Ribbon />
      <main className="flex-1 min-h-0 flex gap-[5px] pt-[4px] bg-linear-to-b from-[#dcdce0] from-0% to-white to-1%">
        <Navigator />
        <div className="flex-1 min-w-0 flex flex-col gap-[6px]">
          <MainView />
          <DataPanel />
        </div>
        <Info />
      </main>
      <footer className="h-[25px] shrink-0 flex items-center pl-[2px] text-[9px] text-black font-['Open_Sans','Noto_Sans',sans-serif]">
        Calculation duration: 0 min, 0 s, 0 ms
      </footer>
    </div>
  );
}
